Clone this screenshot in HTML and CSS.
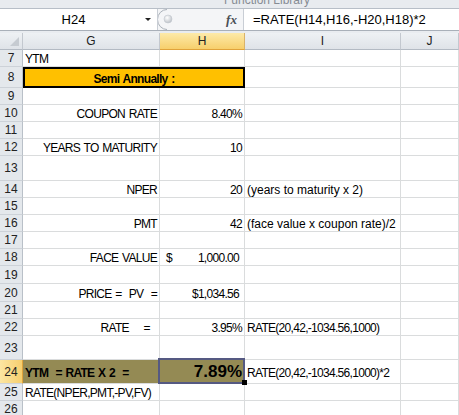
FILE: index.html
```html
<!DOCTYPE html>
<html lang="en">
<head>
    <meta charset="UTF-8">
    <title>YTM - Semi Annually</title>
    <link rel="stylesheet" href="styles.css">
</head>
<body>

<div class="ribbon"><span>Function Library</span></div>

<div class="fbar">
    <div class="namebox">
        <span class="ref">H24</span>
        <span class="drop"></span>
    </div>
    <div class="grip">
        <svg width="62" height="21" viewBox="0 0 62 21">
            <defs>
                <radialGradient id="knob" cx="0.4" cy="0.35" r="0.7">
                    <stop offset="0" stop-color="#ffffff"/>
                    <stop offset="1" stop-color="#b9bec5"/>
                </radialGradient>
            </defs>
            <path d="M9 0.5 A9.5 10 0 0 0 9 20.5" fill="none" stroke="#a9b0b8" stroke-width="1"/>
            <circle cx="10" cy="10" r="4" fill="url(#knob)" stroke="#c3c8ce" stroke-width="0.6"/>
        </svg>
    </div>
    <div class="fx">fx</div>
    <div class="formula">=RATE(H14,H16,-H20,H18)*2</div>
</div>
<div class="sep"></div>

<div class="sheet">
    <!-- column headers -->
    <div class="hd corner"><span class="tri"></span></div>
    <div class="hd">G</div>
    <div class="hd on">H</div>
    <div class="hd">I</div>
    <div class="hd">J</div>

    <div class="rh">7</div>
    <div class="cell c">YTM</div>
    <div class="cell"></div>
    <div class="cell"></div>
    <div class="cell"></div>

    <div class="rh">8</div>
    <div class="cell merge">Semi Annually :</div>
    <div class="cell"></div>
    <div class="cell"></div>

    <div class="rh">9</div>
    <div class="cell"></div><div class="cell"></div><div class="cell"></div><div class="cell"></div>

    <div class="rh">10</div>
    <div class="cell c right">COUPON RATE</div>
    <div class="cell n right">8.40%</div>
    <div class="cell"></div>
    <div class="cell"></div>

    <div class="rh">11</div>
    <div class="cell"></div><div class="cell"></div><div class="cell"></div><div class="cell"></div>

    <div class="rh">12</div>
    <div class="cell c right">YEARS TO MATURITY</div>
    <div class="cell n right">10</div>
    <div class="cell"></div>
    <div class="cell"></div>

    <div class="rh">13</div>
    <div class="cell"></div><div class="cell"></div><div class="cell"></div><div class="cell"></div>

    <div class="rh">14</div>
    <div class="cell c right">NPER</div>
    <div class="cell n right">20</div>
    <div class="cell note">(years to maturity x 2)</div>
    <div class="cell"></div>

    <div class="rh">15</div>
    <div class="cell"></div><div class="cell"></div><div class="cell"></div><div class="cell"></div>

    <div class="rh">16</div>
    <div class="cell c right">PMT</div>
    <div class="cell n right">42</div>
    <div class="cell note">(face value x coupon rate)/2</div>
    <div class="cell"></div>

    <div class="rh">17</div>
    <div class="cell"></div><div class="cell"></div><div class="cell"></div><div class="cell"></div>

    <div class="rh">18</div>
    <div class="cell c right">FACE VALUE</div>
    <div class="cell n acct"><span>$</span><span>1,000.00</span></div>
    <div class="cell"></div>
    <div class="cell"></div>

    <div class="rh">19</div>
    <div class="cell"></div><div class="cell"></div><div class="cell"></div><div class="cell"></div>

    <div class="rh">20</div>
    <div class="cell c right">PRICE =  PV  =</div>
    <div class="cell n right cur">$1,034.56</div>
    <div class="cell"></div>
    <div class="cell"></div>

    <div class="rh">21</div>
    <div class="cell"></div><div class="cell"></div><div class="cell"></div><div class="cell"></div>

    <div class="rh">22</div>
    <div class="cell c right">RATE    =  </div>
    <div class="cell n right">3.95%</div>
    <div class="cell n note">RATE(20,42,-1034.56,1000)</div>
    <div class="cell"></div>

    <div class="rh">23</div>
    <div class="cell"></div><div class="cell"></div><div class="cell"></div><div class="cell"></div>

    <div class="rh on">24</div>
    <div class="cell c olive big">YTM  = RATE X 2  =</div>
    <div class="cell olive big right sel"><span class="total">7.89%</span></div>
    <div class="cell n note big">RATE(20,42,-1034.56,1000)*2</div>
    <div class="cell"></div>

    <div class="rh">25</div>
    <div class="cell c">RATE(NPER,PMT,-PV,FV)</div>
    <div class="cell"></div>
    <div class="cell"></div>
    <div class="cell"></div>

    <div class="rh">26</div>
    <div class="cell"></div><div class="cell"></div><div class="cell"></div><div class="cell"></div>
</div>

</body>
</html>
```

FILE: styles.css
```css
* {
    box-sizing: border-box;
}
body {
    margin: 0;
    width: 459px;
    height: 415px;
    overflow: hidden;
    font-family: "Liberation Sans", Arial, sans-serif;
    font-size: 12px;
    color: #000;
    background: #fff;
}

/* ribbon edge + formula bar */
.ribbon {
    height: 9px;
    padding-left: 224px;
    background: #e8ebef;
    border-bottom: 1px solid #b7bec7;
    overflow: hidden;
}
.ribbon span {
    display: block;
    margin-top: -6px;
    font-size: 12px;
    line-height: 13px;
    color: #868c94;
}
.fbar {
    display: flex;
    height: 22px;
    border-bottom: 1px solid #a9b0b9;
    background: #f4f5f7;
}
.namebox {
    display: flex;
    align-items: center;
    width: 158px;
    background: #fff;
    border-right: 1px solid #c9ced5;
}
.ref {
    flex: 1;
    text-align: center;
    font-size: 13px;
    padding-left: 2px;
}
.drop {
    width: 0;
    height: 0;
    margin-right: 6px;
    border-left: 3px solid transparent;
    border-right: 3px solid transparent;
    border-top: 3px solid #222;
}
.grip {
    width: 62px;
}
.grip svg {
    display: block;
}
.fx {
    width: 24px;
    padding-top: 3px;
    text-align: center;
    font-family: "Liberation Serif", serif;
    font-style: italic;
    font-weight: bold;
    font-size: 13px;
    color: #4a4f55;
    border-right: 1px solid #c9ced5;
}
.formula {
    flex: 1;
    padding: 3px 0 0 9px;
    font-size: 13px;
    background: #fff;
}
.sep {
    height: 2px;
    background: #e9ecf0;
}

/* grid */
.sheet {
    display: grid;
    grid-template-columns: 23px 137px 85px 156px 58px;
    grid-template-rows: 17px 17px 21px 17px 17px 17px 17px 25px 17px 17px 17px 17px 17px 18px 18px 17px 17px 24px 24px 17px 17px;
}
.hd {
    display: flex;
    align-items: center;
    justify-content: center;
    background: linear-gradient(#eef1f4, #dfe3e8);
    border-right: 1px solid #c3c8cf;
    border-bottom: 1px solid #b3bac3;
    color: #222;
}
.hd.on {
    background: linear-gradient(#fdeaa9, #f7cf6c);
    border-bottom-color: #e0a33b;
    border-right-color: #d9b36a;
}
.corner {
    position: relative;
}
.tri {
    position: absolute;
    right: 3px;
    bottom: 3px;
    width: 0;
    height: 0;
    border-left: 9px solid transparent;
    border-bottom: 9px solid #c6cbd1;
}
.rh {
    display: flex;
    align-items: center;
    justify-content: center;
    background: #e4e8ec;
    border-right: 1px solid #b9c0c8;
    border-bottom: 1px solid #cdd2d8;
    color: #222;
}
.rh.on {
    background: linear-gradient(90deg, #fce6a2, #f6cf6e);
    border-right-color: #e0a33b;
}
.cell {
    display: flex;
    align-items: flex-end;
    padding: 0 2px;
    line-height: 14px;
    white-space: pre;
    border-right: 1px solid #dadcdd;
    border-bottom: 1px solid #dadcdd;
}
.right {
    justify-content: flex-end;
}
.c {
    letter-spacing: -0.7px;
    word-spacing: 1px;
}
.n {
    letter-spacing: -0.7px;
}
.note {
    padding-left: 2px;
}
.merge {
    grid-column: span 2;
    justify-content: center;
    background: #ffc000;
    border: 2px solid #000;
    font-weight: bold;
    letter-spacing: -0.7px;
    word-spacing: 1px;
}
.acct {
    justify-content: space-between;
    padding: 0 5px 0 6px;
}
.cur {
    padding-right: 5px;
}
.olive {
    background: #948a54;
    font-weight: bold;
}
.big {
    padding-bottom: 3px;
}
.total {
    font-size: 17px;
    line-height: 17px;
}
.sel {
    position: relative;
}
.sel::after {
    content: "";
    position: absolute;
    left: -2px;
    top: -2px;
    right: -1px;
    bottom: -1px;
    border: 2px solid #555982;
}
.sel::before {
    content: "";
    position: absolute;
    right: -3px;
    bottom: -2px;
    width: 5px;
    height: 5px;
    background: #000;
    z-index: 2;
}
```
